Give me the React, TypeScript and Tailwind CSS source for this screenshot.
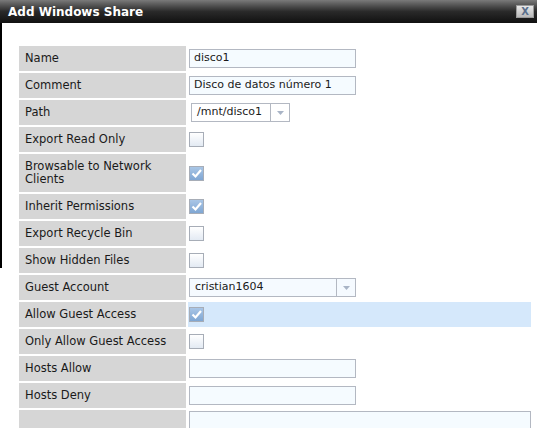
import React from "react";

type Field =
  | { label: string; kind: "text"; value?: string; wide?: boolean }
  | { label: string; kind: "select"; value: string; width: string; offset?: boolean; tint?: boolean }
  | { label: string; kind: "check"; checked: boolean; tall?: boolean; highlight?: boolean };

const fields: Field[] = [
  { label: "Name", kind: "text", value: "disco1" },
  { label: "Comment", kind: "text", value: "Disco de datos número 1" },
  { label: "Path", kind: "select", value: "/mnt/disco1", width: "w-[99px]", offset: true },
  { label: "Export Read Only", kind: "check", checked: false },
  { label: "Browsable to Network Clients", kind: "check", checked: true, tall: true },
  { label: "Inherit Permissions", kind: "check", checked: true },
  { label: "Export Recycle Bin", kind: "check", checked: false },
  { label: "Show Hidden Files", kind: "check", checked: false },
  { label: "Guest Account", kind: "select", value: "cristian1604", width: "w-[167px]", tint: true },
  { label: "Allow Guest Access", kind: "check", checked: true, highlight: true },
  { label: "Only Allow Guest Access", kind: "check", checked: false },
  { label: "Hosts Allow", kind: "text" },
  { label: "Hosts Deny", kind: "text" },
  { label: "", kind: "text", wide: true },
];

function Checkbox({ checked }: { checked: boolean }) {
  return (
    <div
      className={
        "w-[15px] h-[15px] border border-[#a7adb7] flex items-center justify-center " +
        (checked
          ? "bg-gradient-to-b from-[#a9c6e6] to-[#7fa6d3]"
          : "bg-gradient-to-b from-[#ffffff] to-[#e3eaf3]")
      }
    >
      {checked && (
        <svg width="11" height="11" viewBox="0 0 11 11">
          <path d="M1.5 5.5 L4.5 8.5 L10 2" fill="none" stroke="#ffffff" strokeWidth="2.2" />
        </svg>
      )}
    </div>
  );
}

function Select({ value, width, offset, tint }: { value: string; width: string; offset?: boolean; tint?: boolean }) {
  return (
    <div
      className={
        "flex h-[19px] border border-[#b3b8c2] " +
        width +
        (offset ? " ml-[3px]" : " ml-px") +
        (tint ? " bg-[#f5faff]" : " bg-white")
      }
    >
      <div className="flex-1 flex items-center pl-[5px] text-[11px] text-[#1a1a1a] whitespace-nowrap overflow-hidden">
        {value}
      </div>
      <div className="w-[19px] border-l border-[#b3b8c2] flex items-center justify-center">
        <svg width="7" height="4" viewBox="0 0 7 4">
          <path d="M0 0 L7 0 L3.5 4 Z" fill="#a9b4c6" />
        </svg>
      </div>
    </div>
  );
}

export default function App() {
  return (
    <div
      className="w-[537px] h-[428px] overflow-hidden bg-white"
      style={{ fontFamily: '"DejaVu Sans", Verdana, sans-serif' }}
    >
      <div className="h-[23px] bg-gradient-to-b from-[#7a7a7a] via-[#2a2a2a] to-[#111111] flex items-center justify-between pl-[8px] pr-[3px]">
        <span className="text-white font-bold text-[12px] leading-none">Add Windows Share</span>
        <div className="w-[18px] h-[13px] bg-gradient-to-b from-[#e8e8e8] to-[#b9b9b9] border border-[#9a9a9a] flex items-center justify-center text-[10px] font-bold text-[#5a6f8c] leading-none">
          X
        </div>
      </div>
      <div className="flex">
        <div className="w-[2px] h-[245px] bg-black shrink-0" />
        <div className="flex-1 pl-[17px] pr-[6px] pt-[23px]">
          <div className="grid grid-cols-[167px_1fr] gap-[2px]">
            {fields.map((f, i) => (
              <React.Fragment key={i}>
                <div
                  className={
                    "bg-[#d6d6d6] pl-[6px] pr-[4px] flex items-center text-[11.5px] leading-[13px] text-[#1a1a1a] " +
                    (f.kind === "check" && f.tall ? "h-[38px]" : "h-[25px]")
                  }
                >
                  {f.kind === "check" && f.tall ? (
                    <span>
                      Browsable to Network
                      <br />
                      Clients
                    </span>
                  ) : (
                    f.label
                  )}
                </div>
                <div
                  className={
                    "flex items-center " +
                    (f.kind === "check" && f.highlight ? "bg-[#d5e8fb] " : "") +
                    (f.kind === "text" && f.wide ? "items-start pt-[1px]" : "")
                  }
                >
                  {f.kind === "text" && (
                    <div
                      className={
                        "ml-px border border-[#b3b8c2] bg-[#f5fbff] flex items-center pl-[4px] text-[11px] text-[#1a1a1a] " +
                        (f.wide ? "w-[342px] h-[40px]" : "w-[167px] h-[19px]")
                      }
                    >
                      {f.value}
                    </div>
                  )}
                  {f.kind === "select" && (
                    <Select value={f.value} width={f.width} offset={f.offset} tint={f.tint} />
                  )}
                  {f.kind === "check" && (
                    <div className="ml-px">
                      <Checkbox checked={f.checked} />
                    </div>
                  )}
                </div>
              </React.Fragment>
            ))}
          </div>
        </div>
      </div>
    </div>
  );
}
